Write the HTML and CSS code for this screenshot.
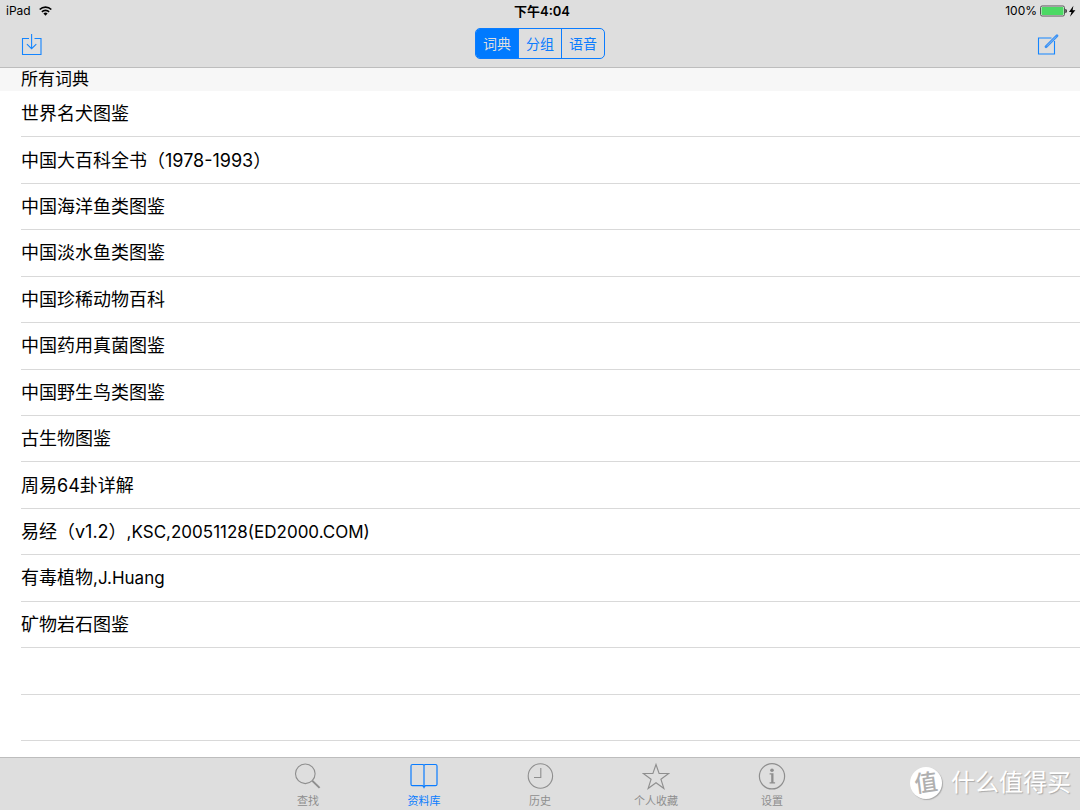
FILE: index.html
```html
<!DOCTYPE html>
<html lang="zh-CN">
<head>
<meta charset="utf-8">
<meta name="viewport" content="width=device-width, initial-scale=1">
<title>所有词典</title>
<link rel="stylesheet" href="styles.css">
</head>
<body>
<div class="app">
  <header class="top">
    <div class="status">
      <div class="status-left">
        <span>iPad</span>
        <svg width="13" height="10" viewBox="0 0 13 10" fill="none" stroke="#000" stroke-width="1.7"><path d="M.7 3.5a8.3 8.3 0 0 1 11.6 0M2.9 5.8a5.1 5.1 0 0 1 7.2 0"/><path d="M6.5 9.7 4.4 7.5a3 3 0 0 1 4.2 0z" fill="#000" stroke="none"/></svg>
      </div>
      <div class="status-time">下午4:04</div>
      <div class="status-right">
        <span>100%</span>
        <svg width="36" height="12" viewBox="0 0 36 12"><rect x=".5" y="1" width="24" height="10" rx="1.6" fill="#eee" stroke="#555"/><rect x="1.5" y="2" width="22" height="8" rx=".8" fill="#4cd964"/><path d="M25.400 4h.5q1 .5 1 2t-1 2h-.5z" fill="#222"/><path d="M33.400 .8 29 6.900h2.500L30 11.700l5.400-6.500h-2.800z" fill="#000"/></svg>
      </div>
    </div>
    <div class="nav">
      <button class="icon-btn" type="button" aria-label="导入">
        <svg width="22" height="24" viewBox="0 0 22 24" fill="none" stroke="#1485ff" stroke-width="1.1"><path d="M8 6.500H1.500v16h18.500V6.500H13.500M10.600 2v14.500M5.900 12.200l4.700 4.500 4.700-4.500"/></svg>
      </button>
      <div class="segments">
        <button class="segment segment-on" type="button">词典</button>
        <button class="segment" type="button">分组</button>
        <button class="segment" type="button">语音</button>
      </div>
      <button class="icon-btn icon-btn-end" type="button" aria-label="编辑">
        <svg width="22" height="24" viewBox="0 0 22 24" fill="none" stroke="#1485ff" stroke-width="1.1"><path d="M14.500 6H1.500v16h16V9"/><path d="M9 14.800 20 3.700" stroke="#3b92f5" stroke-width="2.800" stroke-linecap="round"/><path d="M10 13.800 19 4.700" stroke="#8dbdf0" stroke-width=".8"/></svg>
      </button>
    </div>
  </header>
  <main class="content">
    <h1 class="section">所有词典</h1>
    <ul class="list">
      <li class="row">世界名犬图鉴</li>
      <li class="row">中国大百科全书（1978-1993）</li>
      <li class="row">中国海洋鱼类图鉴</li>
      <li class="row">中国淡水鱼类图鉴</li>
      <li class="row">中国珍稀动物百科</li>
      <li class="row">中国药用真菌图鉴</li>
      <li class="row">中国野生鸟类图鉴</li>
      <li class="row">古生物图鉴</li>
      <li class="row">周易64卦详解</li>
      <li class="row">易经（v1.2）<span class="latin">,KSC,20051128(ED2000.COM)</span></li>
      <li class="row">有毒植物<span class="latin">,J.Huang</span></li>
      <li class="row">矿物岩石图鉴</li>
      <li class="row"></li>
      <li class="row"></li>
    </ul>
  </main>
  <nav class="tabs">
    <button class="tab" type="button">
      <svg width="28" height="28" viewBox="0 0 28 28" fill="none" stroke="#8e8e8e"><circle cx="11.300" cy="11.800" r="9.800" stroke-width="1.100"/><path d="m18.400 18.900 7.200 7" stroke-width="2"/></svg>
      <span>查找</span>
    </button>
    <button class="tab tab-on" type="button">
      <svg width="28" height="28" viewBox="0 0 28 28" fill="none" stroke="#0a7cff" stroke-width="1.200"><path d="M14 3.200 13 2.500H2.500Q1 2.500 1 4v18.200q0 1.500 1.500 1.500h10l1.500 1.500 1.500-1.500h10q1.500 0 1.500-1.500V4q0-1.500-1.500-1.500H15l-1 .7v23"/></svg>
      <span>资料库</span>
    </button>
    <button class="tab" type="button">
      <svg width="28" height="28" viewBox="0 0 28 28" fill="none" stroke="#8e8e8e" stroke-width="1.100"><circle cx="14.400" cy="14" r="12.200"/><path d="M14.800 6v9.500H8"/></svg>
      <span>历史</span>
    </button>
    <button class="tab" type="button">
      <svg width="28" height="28" viewBox="0 0 28 28" fill="none" stroke="#8e8e8e" stroke-width="1.100"><path d="m14 2.500 3.100 9h9.600l-7.800 5.700 3 9.300L14 20.800l-7.900 5.700 3-9.300-7.800-5.700h9.600z"/></svg>
      <span>个人收藏</span>
    </button>
    <button class="tab" type="button">
      <svg width="28" height="28" viewBox="0 0 28 28" fill="none" stroke="#8e8e8e" stroke-width="1.200"><circle cx="14" cy="14.300" r="12.600"/><circle cx="14" cy="8.200" r="1.800" fill="#8e8e8e" stroke="none"/><path d="M11.600 11.300h3.900v9h1.600v1.300h-5.500v-1.300h1.600v-7.700h-1.600z" fill="#8e8e8e" stroke="none"/></svg>
      <span>设置</span>
    </button>
  </nav>
  <div class="mark">
    <span class="mark-badge"><span class="mark-sign">值</span></span>
    <span>什么值得买</span>
  </div>
</div>
</body>
</html>
```
FILE: styles.css
```css
* { box-sizing: border-box; }

body {
  margin: 0;
  background: #fff;
  color: #000;
  font-family: Inter, "Noto Sans CJK SC", sans-serif;
}

button {
  margin: 0;
  padding: 0;
  border: 0;
  background: none;
  color: inherit;
  font: inherit;
}

svg { display: block; flex: none; }

.app {
  position: relative;
  display: flex;
  flex-direction: column;
  min-height: 100vh;
}

.top {
  background: #dedede;
  border-bottom: 1px solid #bdbdbd;
}

.status {
  display: grid;
  grid-template-columns: 1fr auto 1fr;
  align-items: center;
  height: 22px;
  padding: 0 4px 0 6px;
  font-size: 12px;
  line-height: 22px;
}

.status-left,
.status-right {
  display: flex;
  align-items: center;
  gap: 8px;
}

.status-right {
  justify-content: flex-end;
  gap: 3px;
}

.status-time {
  padding-left: 2px;
  font-size: 13px;
  font-weight: 600;
  line-height: 20px;
}

.nav {
  display: grid;
  grid-template-columns: 1fr auto 1fr;
  align-items: center;
  height: 45px;
  padding: 0 21px 2px;
}

.icon-btn { justify-self: start; }
.icon-btn-end { justify-self: end; }

.segments {
  display: flex;
  overflow: hidden;
  border: 1px solid #0a7cff;
  border-radius: 5px;
  color: #0a7cff;
  font-size: 14px;
  line-height: 29px;
}

.segment { width: 42px; }

.segment + .segment {
  width: 43px;
  border-left: 1px solid #0a7cff;
}

.segment-on {
  background: #007aff;
  color: #dedede;
}

.content {
  display: flex;
  flex: 1;
  flex-direction: column;
}

.section {
  margin: 0;
  padding-left: 21px;
  background: #f7f7f7;
  font-size: 17px;
  font-weight: 400;
  line-height: 23px;
}

.list {
  display: grid;
  flex: 1;
  grid-auto-rows: 1fr;
  margin: 0;
  padding: 0 0 16px 21px;
  list-style: none;
}

.row {
  display: flex;
  align-items: center;
  padding-top: 1px;
  border-bottom: 1px solid #d9d9d9;
  font-size: 18px;
  line-height: 24px;
}

.latin { font-size: 17px; }

.tabs {
  display: flex;
  justify-content: center;
  border-top: 1px solid #bdbdbd;
  background: #dedede;
  color: #8e8e8e;
}

.tab {
  display: flex;
  flex-direction: column;
  align-items: center;
  gap: 3px;
  width: 116px;
  padding: 4px 0 1px;
  font-size: 11px;
  line-height: 16px;
}

.tab-on { color: #0a7cff; }

/* Watermark laid over the tab bar */
.mark {
  position: absolute;
  right: 9px;
  bottom: 11px;
  display: flex;
  align-items: center;
  gap: 9px;
  color: #fff;
  font-size: 24px;
  line-height: 32px;
  text-shadow: 1px 1px 1px #aaa;
  pointer-events: none;
}

.mark-badge {
  width: 32px;
  border-radius: 50%;
  background: #fff;
  box-shadow: 1px 1px 1px #aaa;
  color: #b0b0b0;
  font-size: 23px;
  font-weight: 500;
  text-align: center;
  text-shadow: none;
}

.mark-sign {
  display: block;
  transform: rotate(-8deg);
}
```
